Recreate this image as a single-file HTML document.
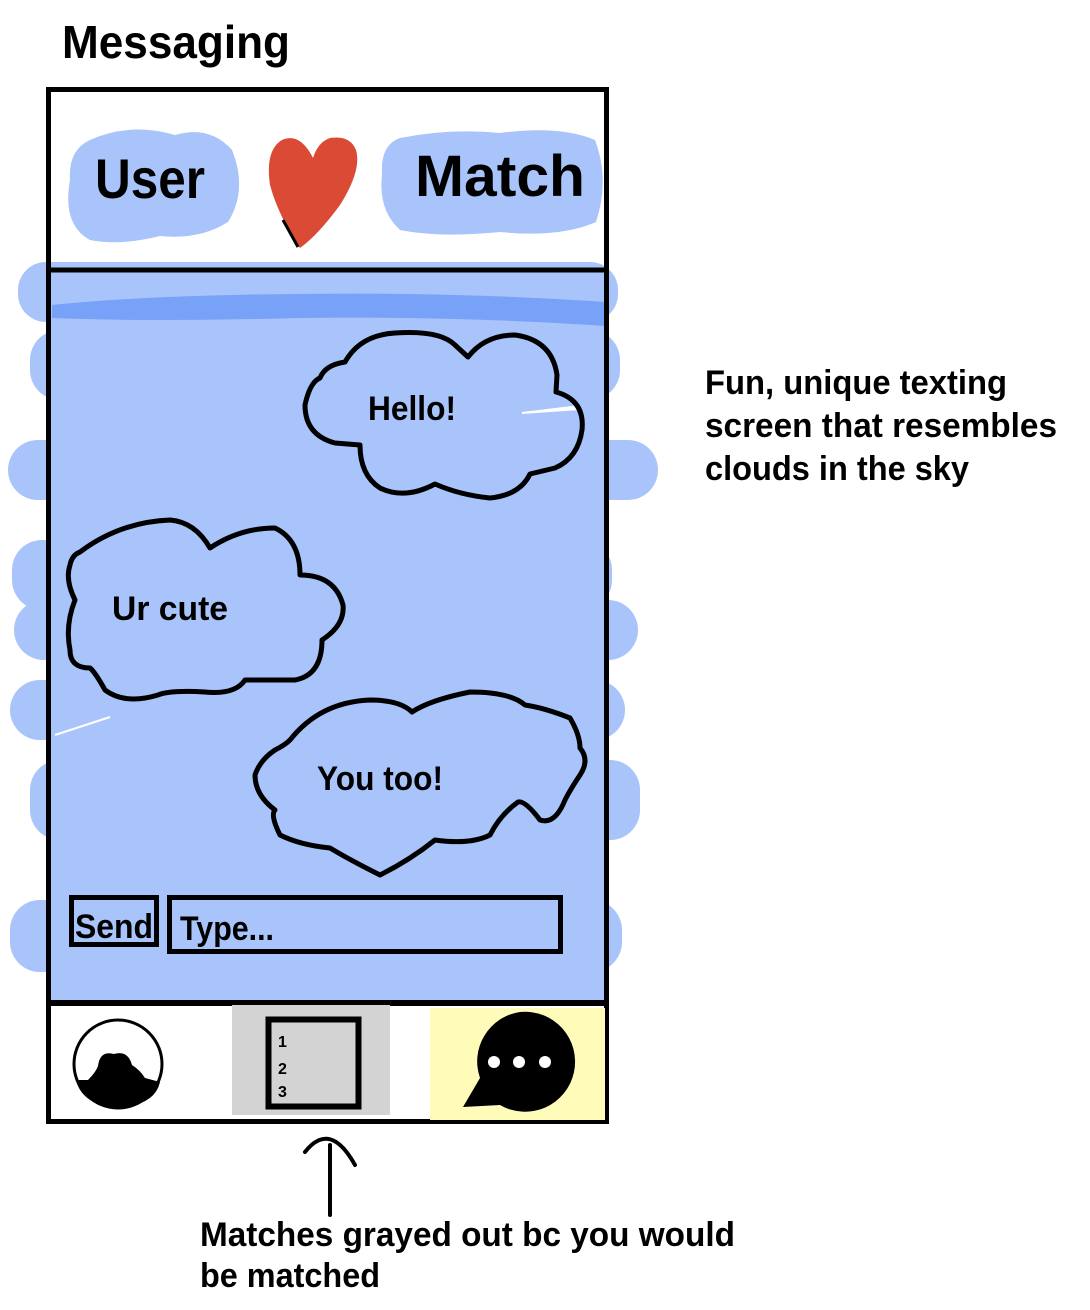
<!DOCTYPE html>
<html><head><meta charset="utf-8"><style>
html,body{margin:0;padding:0;background:#fff;width:1090px;height:1310px;overflow:hidden}
svg{display:block}
text{font-family:"Liberation Sans",sans-serif;font-weight:bold;fill:#000}
</style></head><body>
<svg width="1090" height="1310" viewBox="0 0 1090 1310" xmlns="http://www.w3.org/2000/svg">
<!-- title -->
<text x="62" y="58" font-size="46" textLength="228" lengthAdjust="spacingAndGlyphs">Messaging</text>

<!-- blue sky blobs outside frame -->
<g fill="#a8c4fa">
<rect x="18" y="262" width="600" height="60" rx="28"/>
<rect x="30" y="330" width="590" height="70" rx="30"/>
<rect x="8" y="440" width="650" height="60" rx="30"/>
<rect x="12" y="540" width="600" height="70" rx="30"/>
<rect x="14" y="600" width="624" height="60" rx="30"/>
<rect x="10" y="680" width="615" height="60" rx="30"/>
<rect x="30" y="760" width="610" height="80" rx="30"/>
<rect x="10" y="900" width="612" height="72" rx="30"/>
<rect x="150" y="960" width="440" height="40" rx="18"/>
<rect x="50" y="272" width="556" height="728"/>
</g>
<path d="M52 305 Q150 295 300 294 Q460 292 606 302 L606 326 Q460 316 300 318 Q150 322 52 318Z" fill="#78a2f7"/>
<path d="M55 735 L110 717" stroke="#fff" stroke-width="2"/>
<path d="M522 412 L580 405 L580 410 L522 414Z" fill="#fff"/>

<!-- header bubbles -->
<g fill="#a8c4fa">
<path d="M90 140 Q130 122 175 135 Q210 125 232 150 Q248 190 228 222 Q200 240 160 236 Q120 246 90 240 Q62 225 70 180 Q68 150 90 140Z"/>
<path d="M400 138 Q450 128 500 133 Q560 125 595 140 Q610 180 596 222 Q560 238 500 232 Q440 238 400 230 Q378 210 382 175 Q380 145 400 138Z"/>
</g>
<text x="95" y="198" font-size="56" textLength="110" lengthAdjust="spacingAndGlyphs">User</text>
<text x="415" y="196" font-size="58" textLength="170" lengthAdjust="spacingAndGlyphs">Match</text>
<!-- heart -->
<path d="M313 158 Q300 132 282 140 Q265 150 270 185 Q278 215 300 248 Q318 235 340 205 Q362 170 356 150 Q350 135 330 138 Q318 142 313 158Z" fill="#db4a35"/>
<path d="M283 220 L298 247" stroke="#000" stroke-width="3"/>

<!-- frame -->
<rect x="48.5" y="89.5" width="558" height="1032" fill="none" stroke="#000" stroke-width="5"/>
<line x1="48" y1="270" x2="607" y2="270" stroke="#000" stroke-width="5"/>
<line x1="48" y1="1003" x2="607" y2="1003" stroke="#000" stroke-width="6"/>

<!-- clouds -->
<g fill="none" stroke="#000" stroke-width="5" stroke-linejoin="round" stroke-linecap="round">
<path d="M345 362 Q360 335 395 333 Q440 330 455 345 L468 357 Q485 335 515 335 Q552 340 557 375 L556 392 Q585 400 582 430 Q578 458 555 468 L530 474 Q520 495 490 498 Q460 495 435 484 Q405 500 380 488 Q360 475 360 445 L335 443 Q305 435 305 405 Q310 382 320 378 Q325 365 345 362Z"/>
<path d="M80 552 Q120 522 170 520 Q195 522 210 548 Q240 528 275 528 Q300 540 300 575 Q335 575 343 605 Q345 625 322 640 Q322 675 295 680 L245 680 Q235 695 205 692 Q170 690 158 695 Q125 705 105 690 Q95 672 90 668 Q70 668 70 650 Q65 625 75 600 Q65 580 70 565 Q72 555 80 552Z"/>
<path d="M290 740 Q320 702 370 700 Q400 700 412 712 Q430 700 470 692 Q510 692 525 705 Q545 708 570 718 Q580 735 580 748 Q590 760 580 775 Q570 790 565 800 Q555 825 540 820 Q525 800 518 802 Q500 815 490 835 Q470 845 435 840 Q410 860 380 875 Q350 860 330 848 Q300 845 280 835 Q270 815 275 810 Q255 795 255 775 Q260 760 275 750 Q285 745 290 740Z"/>
</g>
<text x="368" y="420" font-size="34" textLength="88" lengthAdjust="spacingAndGlyphs">Hello!</text>
<text x="112" y="620" font-size="34" textLength="116" lengthAdjust="spacingAndGlyphs">Ur cute</text>
<text x="317" y="790" font-size="34" textLength="126" lengthAdjust="spacingAndGlyphs">You too!</text>

<!-- input -->
<rect x="71.5" y="897.5" width="85" height="47" fill="none" stroke="#000" stroke-width="5"/>
<text x="75" y="938" font-size="34" textLength="78" lengthAdjust="spacingAndGlyphs">Send</text>
<rect x="169.5" y="897.5" width="391" height="54" fill="none" stroke="#000" stroke-width="5"/>
<text x="180" y="940" font-size="34" textLength="94" lengthAdjust="spacingAndGlyphs">Type...</text>

<!-- nav -->
<rect x="232" y="1005" width="158" height="110" fill="#d3d3d3"/>
<rect x="430" y="1008" width="175" height="112" fill="#fefcb8"/>
<circle cx="118" cy="1064" r="44" fill="#fff" stroke="#000" stroke-width="3"/>
<path d="M76 1080 L88 1080 Q96 1072 98 1066 Q100 1050 114 1054 Q128 1050 132 1065 Q140 1070 145 1078 L160 1082 Q155 1105 118 1108 Q82 1105 76 1080Z" fill="#000"/>
<rect x="268.5" y="1019.5" width="90" height="87" fill="#d3d3d3" stroke="#000" stroke-width="6"/>
<text x="278" y="1047" font-size="16" font-weight="normal">1</text>
<text x="278" y="1074" font-size="16" font-weight="normal">2</text>
<text x="278" y="1097" font-size="16" font-weight="normal">3</text>
<path d="M520 1012 A50 50 0 1 1 500 1105 L463 1107 L480 1078 A50 50 0 0 1 520 1012Z" fill="#000"/>
<circle cx="494" cy="1062" r="6" fill="#fff"/>
<circle cx="519" cy="1062" r="6" fill="#fff"/>
<circle cx="545" cy="1062" r="6" fill="#fff"/>

<!-- arrow -->
<path d="M330 1215 L330 1145 M305 1152 Q330 1120 355 1165" fill="none" stroke="#000" stroke-width="4" stroke-linecap="round"/>

<!-- notes -->
<text x="705" y="394" font-size="34" textLength="302" lengthAdjust="spacingAndGlyphs">Fun, unique texting</text>
<text x="705" y="437" font-size="34" textLength="352" lengthAdjust="spacingAndGlyphs">screen that resembles</text>
<text x="705" y="480" font-size="34" textLength="264" lengthAdjust="spacingAndGlyphs">clouds in the sky</text>
<text x="200" y="1246" font-size="34" textLength="535" lengthAdjust="spacingAndGlyphs">Matches grayed out bc you would</text>
<text x="200" y="1287" font-size="34" textLength="180" lengthAdjust="spacingAndGlyphs">be matched</text>
</svg>
</body></html>
